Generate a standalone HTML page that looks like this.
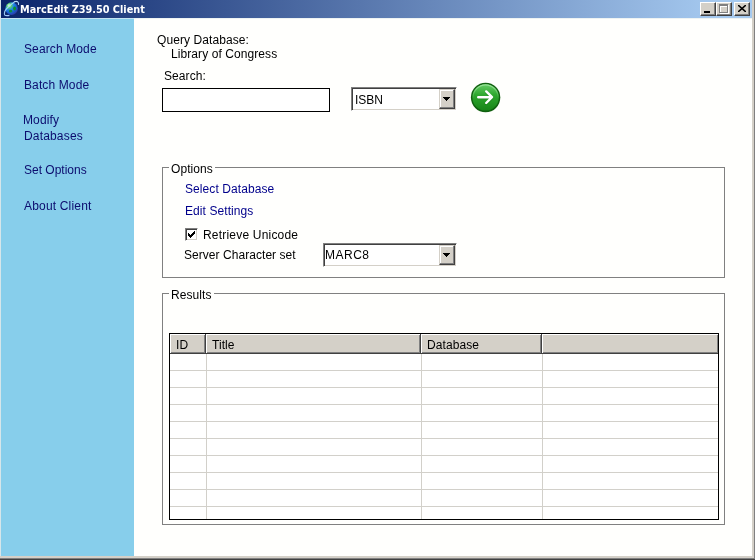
<!DOCTYPE html>
<html>
<head>
<meta charset="utf-8">
<title>MarcEdit Z39.50 Client</title>
<style>
html,body{margin:0;padding:0;}
body{width:755px;height:560px;position:relative;overflow:hidden;background:#fffffd;font-family:"Liberation Sans",Arial,sans-serif;font-size:12px;color:#000;}
.abs{position:absolute;white-space:nowrap;line-height:14px;letter-spacing:0.08px;}
#titlebar{position:absolute;left:1px;top:0;width:751px;height:18px;background:linear-gradient(to right,#0a246a 0%,#a6caf0 96%);}
#title{position:absolute;left:20px;top:3px;font-family:"DejaVu Sans Condensed","DejaVu Sans","Liberation Sans",sans-serif;font-weight:bold;font-size:10.8px;color:#fff;line-height:14px;white-space:nowrap;}
#sidebar{position:absolute;left:1px;top:19px;width:133px;height:537px;background:#87ceeb;}
.nav{color:#0c0c6e;letter-spacing:0.12px;}
.lnk{color:#00008b;}
.wbtn{position:absolute;top:2px;width:16px;height:14px;box-sizing:border-box;background:#d4d0c8;border:1px solid;border-color:#fff #404040 #404040 #fff;box-shadow:inset -1px -1px 0 #808080;}
.grp{position:absolute;box-sizing:border-box;border:1px solid #808080;}
.grp span{position:absolute;left:6px;top:-6px;background:#fffffd;padding:0 2px 0 2px;line-height:14px;letter-spacing:0.08px;}
.sel{position:absolute;box-sizing:border-box;background:#fff;border:1px solid;border-color:#808080 #fff #fff #808080;box-shadow:inset 1px 1px 0 #404040,inset -1px -1px 0 #d4d0c8;}
.sel .txt{position:absolute;left:3px;top:5px;line-height:14px;}
.sel .dd{position:absolute;right:1px;top:1px;bottom:1px;width:16px;box-sizing:border-box;background:#d4d0c8;border:1px solid;border-color:#d4d0c8 #404040 #404040 #d4d0c8;box-shadow:inset -1px -1px 0 #808080,inset 1px 1px 0 #fff;}
.sel .dd svg{position:absolute;left:3px;top:7px;}
#tbl{position:absolute;left:169px;top:333px;width:548px;height:185px;border:1px solid #000;background:#fff;}
.th{position:absolute;top:0;height:19px;background:#d4d0c8;border-right:1px solid #404040;border-bottom:1px solid #404040;box-shadow:inset 1px 1px 0 #fff,inset -1px -1px 0 #808080;line-height:23px;padding-left:6px;box-sizing:content-box;letter-spacing:0.08px;}
.hl{position:absolute;left:0;width:548px;height:1px;background:#d2d0ca;}
.vl{position:absolute;top:20px;bottom:0;width:1px;background:#d2d0ca;}
</style>
</head>
<body>
<div id="wrap" style="position:absolute;left:0;top:0;width:755px;height:560px;will-change:transform">
<div id="titlebar"></div>
<div style="position:absolute;left:1px;top:18px;width:751px;height:1px;background:#eef3f3"></div>
<div style="position:absolute;left:1px;top:18px;width:133px;height:1px;background:#c4e4f0"></div>
<svg style="position:absolute;left:1px;top:0" width="22" height="18" viewBox="0 0 22 18">
  <defs>
    <radialGradient id="g1" cx="30%" cy="25%" r="80%"><stop offset="0" stop-color="#e8fff0"/><stop offset="0.22" stop-color="#58d070"/><stop offset="0.45" stop-color="#1e86e6"/><stop offset="0.8" stop-color="#1a58c8"/><stop offset="1" stop-color="#3038a0"/></radialGradient>
  </defs>
  <circle cx="10.6" cy="8.6" r="6.3" fill="url(#g1)"/>
  <ellipse cx="13.6" cy="8.6" rx="1.5" ry="2" fill="#0f9030"/>
  <ellipse cx="9.6" cy="11.2" rx="1.6" ry="1.4" fill="#0f8a40"/>
  <path d="M3.6 15.2 Q2.6 11.5 6.2 8 Q9.5 4.6 13.4 2" fill="none" stroke="#a8dcff" stroke-width="1.1" stroke-opacity="0.9"/>
  <path d="M3.6 15.2 Q5.5 16 8.4 15.3" fill="none" stroke="#a0c8f8" stroke-width="1.2"/>
  <path d="M13 1.8 Q16.5 0.6 17.3 2.6 Q17.7 3.6 17.4 4.8" fill="none" stroke="#b8dcf8" stroke-width="1.1"/>
</svg>
<div id="title">MarcEdit Z39.50 Client</div>
<div class="wbtn" style="left:700px"><i style="position:absolute;left:3px;top:8px;width:6px;height:2px;background:#000"></i></div>
<div class="wbtn" style="left:716px"><i style="position:absolute;left:3px;top:2px;width:7px;height:6px;border:1px solid #fff;border-top-width:2px;"></i><i style="position:absolute;left:2px;top:1px;width:7px;height:6px;border:1px solid #808080;border-top-width:2px;"></i></div>
<div class="wbtn" style="left:734px"><svg style="position:absolute;left:3px;top:2px" width="8" height="7" viewBox="0 0 8 7"><path d="M0 0 L8 7 M8 0 L0 7" stroke="#000" stroke-width="1.6"/></svg></div>

<div id="sidebar"></div>
<div class="abs nav" style="left:24px;top:42px">Search Mode</div>
<div class="abs nav" style="left:24px;top:78px">Batch Mode</div>
<div class="abs nav" style="left:23px;top:113px">Modify</div>
<div class="abs nav" style="left:24px;top:129px;letter-spacing:0.17px">Databases</div>
<div class="abs nav" style="left:24px;top:163px;letter-spacing:0">Set Options</div>
<div class="abs nav" style="left:24px;top:199px;letter-spacing:0.18px">About Client</div>

<div class="abs" style="left:157px;top:33px">Query Database:</div>
<div class="abs" style="left:171px;top:47px">Library of Congress</div>
<div class="abs" style="left:164px;top:69px">Search:</div>
<div style="position:absolute;left:162px;top:88px;width:166px;height:22px;border:1px solid #000;background:#fff"></div>

<div class="sel" style="left:351px;top:87px;width:106px;height:24px"><span class="txt">ISBN</span><span class="dd"><svg width="7" height="4" viewBox="0 0 7 4" shape-rendering="crispEdges"><path d="M0 0h7v1h-1v1h-1v1h-1v1h-1v-1h-1v-1h-1v-1h-1z" fill="#000"/></svg></span></div>

<svg style="position:absolute;left:469px;top:81px" width="33" height="33" viewBox="0 0 33 33">
  <defs>
    <linearGradient id="gb" x1="0" y1="0" x2="0" y2="1"><stop offset="0" stop-color="#66cc66"/><stop offset="0.4" stop-color="#2fa82f"/><stop offset="1" stop-color="#178517"/></linearGradient>
    <linearGradient id="gr" x1="0" y1="0" x2="0" y2="1"><stop offset="0" stop-color="#9be49b" stop-opacity="0.9"/><stop offset="0.55" stop-color="#9be49b" stop-opacity="0"/></linearGradient>
  </defs>
  <circle cx="16.6" cy="16.5" r="14.7" fill="#10600f"/>
  <circle cx="16.6" cy="16.4" r="13.2" fill="url(#gb)"/>
  <circle cx="16.6" cy="16.4" r="12.6" fill="none" stroke="url(#gr)" stroke-width="1.2"/>
  <path d="M9.2 17.1 H22 M17.2 11.3 L23 17.1 L17.2 22.9" fill="none" stroke="#0f6a0f" stroke-opacity="0.5" stroke-width="2.5" stroke-linecap="round" stroke-linejoin="round"/>
  <path d="M9.2 16.2 H22 M17.2 10.4 L23 16.2 L17.2 22" fill="none" stroke="#fff" stroke-width="2.4" stroke-linecap="round" stroke-linejoin="round"/>
</svg>

<div class="grp" style="left:162px;top:167px;width:563px;height:111px"><span>Options</span></div>
<div class="abs lnk" style="left:185px;top:182px">Select Database</div>
<div class="abs lnk" style="left:185px;top:204px">Edit Settings</div>
<div style="position:absolute;left:185px;top:228px;width:13px;height:13px;box-sizing:border-box;border:1px solid;border-color:#808080 #fff #fff #808080;background:#fff;box-shadow:inset 1px 1px 0 #404040,inset -1px -1px 0 #d4d0c8"></div>
<svg style="position:absolute;left:188px;top:231px" width="7" height="7" viewBox="0 0 7 7" shape-rendering="crispEdges"><path d="M0 2h1v1h1v1h1v-1h1v-1h1v-1h1v-1h1v3h-1v1h-1v1h-1v1h-1v1h-1v-1h-1v-1h-1z" fill="#000"/></svg>
<div class="abs" style="left:203px;top:228px;letter-spacing:0.2px">Retrieve Unicode</div>
<div class="abs" style="left:184px;top:248px;letter-spacing:0.05px">Server Character set</div>
<div class="sel" style="left:323px;top:243px;width:134px;height:24px"><span class="txt" style="left:1px;top:4px;letter-spacing:0.5px">MARC8</span><span class="dd"><svg width="7" height="4" viewBox="0 0 7 4" shape-rendering="crispEdges"><path d="M0 0h7v1h-1v1h-1v1h-1v1h-1v-1h-1v-1h-1v-1h-1z" fill="#000"/></svg></span></div>

<div class="grp" style="left:162px;top:293px;width:563px;height:232px"><span>Results</span></div>
<div id="tbl">
  <div class="th" style="left:0;width:29px">ID</div>
  <div class="th" style="left:36px;width:208px">Title</div>
  <div class="th" style="left:251px;width:114px">Database</div>
  <div class="th" style="left:372px;width:170px;border-right:none"></div>
  <div class="hl" style="top:36px"></div>
  <div class="hl" style="top:53px"></div>
  <div class="hl" style="top:70px"></div>
  <div class="hl" style="top:87px"></div>
  <div class="hl" style="top:104px"></div>
  <div class="hl" style="top:121px"></div>
  <div class="hl" style="top:138px"></div>
  <div class="hl" style="top:155px"></div>
  <div class="hl" style="top:172px"></div>
  <div class="vl" style="left:36px"></div>
  <div class="vl" style="left:251px"></div>
  <div class="vl" style="left:372px"></div>
</div>

<div style="position:absolute;left:0;top:0;width:1px;height:556px;background:#d6e6ea"></div>
<div style="position:absolute;left:752px;top:0;width:2px;height:560px;background:#d4d0c8"></div>
<div style="position:absolute;left:754px;top:0;width:1px;height:560px;background:#808080"></div>
<div style="position:absolute;left:0;top:556px;width:754px;height:2px;background:#d4d0c8"></div>
<div style="position:absolute;left:0;top:558px;width:755px;height:1px;background:#808080"></div>
<div style="position:absolute;left:0;top:559px;width:755px;height:1px;background:#404040"></div>
</div>
</body>
</html>
